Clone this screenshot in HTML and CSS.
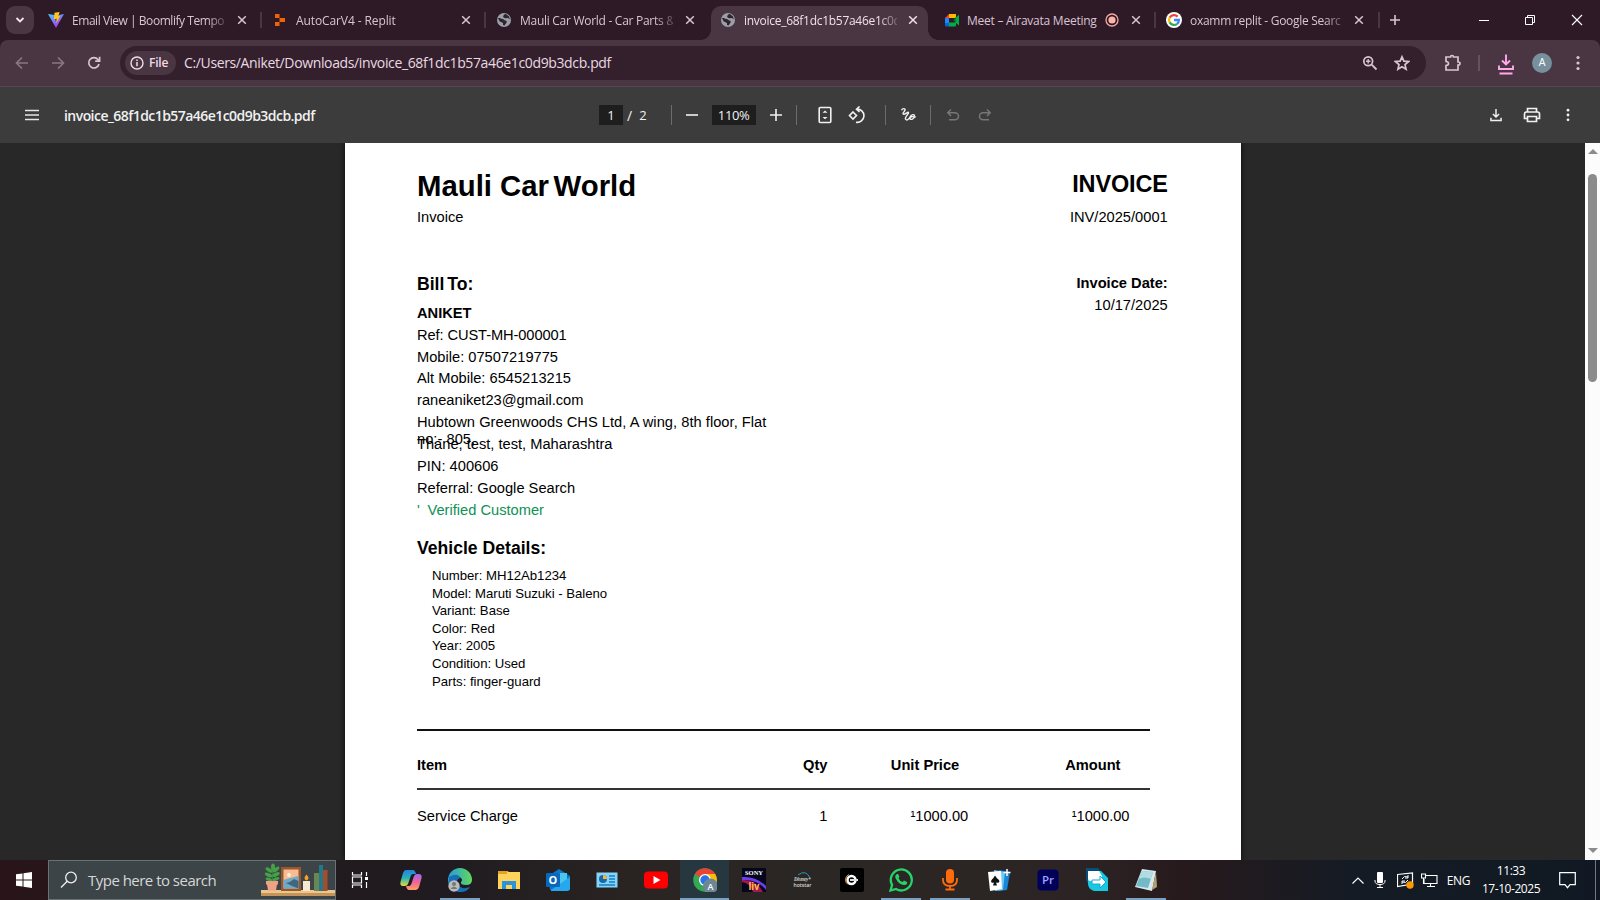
FILE: index.html
```html
<!DOCTYPE html>
<html lang="en">
<head>
<meta charset="utf-8">
<title>invoice_68f1dc1b57a46e1c0d9b3dcb.pdf</title>
<link rel="stylesheet" href="styles.css">
</head>
<body>
<svg width="0" height="0" class="defs">
  <defs>
    <symbol id="globe" viewBox="0 0 16 16"><circle cx="8" cy="8" r="7" fill="#9aa0a6"/><path d="M2 6c2-.2 3 .6 4.500 1 1.500.3 1.500 1.500 3 1.500 1.300.2 1.500 1.500.8 2.500L8.500 13.500 7 13V11L3.500 9.200zM8 2.500 7 5l2 1.200L12 6l1.800 1.500L13 4.500 10 2z" fill="#33222f"/></symbol>
    <symbol id="x" viewBox="0 0 10 10"><path d="M1.200 1.200l7.600 7.600M8.800 1.200L1.200 8.800" stroke="currentColor" stroke-width="1.500" fill="none"/></symbol>
    <symbol id="save" viewBox="0 0 16 16"><path d="M8 1v9M4.500 6.800L8 10.300l3.500-3.500M2.200 11v3.200h11.600V11" stroke="currentColor" stroke-width="1.700" fill="none"/></symbol>
    <symbol id="dots" viewBox="0 0 4 16"><g fill="currentColor"><circle cx="2" cy="2.500" r="1.600"/><circle cx="2" cy="8" r="1.600"/><circle cx="2" cy="13.500" r="1.600"/></g></symbol>
  </defs>
</svg>

<div class="tabs">
  <div class="tab-search"><svg width="10" height="8" viewBox="0 0 10 8"><path d="M1.500 2l3.500 3.500L8.500 2" stroke="#f3e4ee" stroke-width="1.800" fill="none"/></svg></div>
  <div class="tab line">
    <svg width="16" height="16" viewBox="0 0 16 16"><defs><linearGradient id="v" x1="0" y1="0" x2=".6" y2="1"><stop offset="0" stop-color="#41d1ff"/><stop offset="1" stop-color="#b32bf5"/></linearGradient></defs><path d="M0 2l6.500 1L8 10l3-7 5-1-8 14z" fill="url(#v)"/><path d="M6.500.8L11.500 0 10.500 4l1.800-.3-4 7.500.2-4.500-2.700.5z" fill="#ffc61e"/></svg>
    <span class="tt tight">Email View | Boomlify Tempo</span><svg class="cl"><use href="#x"/></svg>
  </div>
  <div class="tab line">
    <svg width="16" height="16" viewBox="0 0 16 16"><path d="M3 2h4.500v4H3zM7.500 6H13v4H7.500zM3 10h4.500v4H3z" fill="#f26207"/></svg>
    <span class="tt plain">AutoCarV4 - Replit</span><svg class="cl"><use href="#x"/></svg>
  </div>
  <div class="tab">
    <svg width="16" height="16"><use href="#globe"/></svg>
    <span class="tt">Mauli Car World - Car Parts &amp;</span><svg class="cl"><use href="#x"/></svg>
  </div>
  <div class="tab active">
    <svg width="16" height="16"><use href="#globe"/></svg>
    <span class="tt">invoice_68f1dc1b57a46e1c0d</span><svg class="cl"><use href="#x"/></svg>
  </div>
  <div class="tab line meet">
    <svg width="16" height="16" viewBox="0 0 16 16"><path d="M5 2h7v4H5z" fill="#ffba00"/><path d="M5 2v4H1z" fill="#ea4335"/><path d="M1 6h4v5H1z" fill="#2684fc"/><path d="M1 11h4v3.500H2q-1 0-1-1z" fill="#0066da"/><path d="M5 10.500h6V6l4-3.200v10.700L12 11v2.500q0 1-1 1H5z" fill="#00ac47"/><path d="M9.500 8L12 5v6z" fill="#00832d"/></svg>
    <span class="tt short">Meet – Airavata Meeting</span>
    <svg class="rec" width="14" height="14" viewBox="0 0 14 14"><circle cx="7" cy="7" r="6" fill="none" stroke="#f4a9a2" stroke-width="1.300"/><circle cx="7" cy="7" r="3.600" fill="#ffb4ab"/></svg><svg class="cl"><use href="#x"/></svg>
  </div>
  <div class="tab line last">
    <svg width="16" height="16" viewBox="0 0 16 16"><circle cx="8" cy="8" r="8" fill="#fff"/><g fill="none" stroke-width="2.300"><path d="M11.600 4.600A5 5 0 0 0 3.700 5.600" stroke="#ea4335"/><path d="M3.700 5.500A5 5 0 0 0 3.700 10.500" stroke="#fbbc05"/><path d="M3.700 10.400A5 5 0 0 0 11.200 11.800" stroke="#34a853"/><path d="M8 8h4.900A5 5 0 0 1 11.200 11.800" stroke="#4285f4"/></g></svg>
    <span class="tt">oxamm replit - Google Searc</span><svg class="cl"><use href="#x"/></svg>
  </div>
  <svg class="plus" width="12" height="12" viewBox="0 0 12 12"><path d="M6 1v10M1 6h10" stroke="#dcc3d4" stroke-width="1.600"/></svg>
  <div class="win">
    <svg width="10" height="10"><path d="M0 5.500h10" stroke="#fff"/></svg>
    <svg width="12" height="12"><path d="M3.500 3.500v-2h7v7h-2M1.500 3.500h7v7h-7z" stroke="#fff" fill="none"/></svg>
    <svg width="12" height="12"><path d="M1 1l10 10M11 1L1 11" stroke="#fff" stroke-width="1.100"/></svg>
  </div>
</div>

<div class="bar">
  <svg class="dim" width="14" height="14" viewBox="0 0 14 14"><path d="M13 7H2M7 1.500L1.500 7 7 12.500" /></svg>
  <svg class="dim fwd" width="14" height="14" viewBox="0 0 14 14"><path d="M1 7h11M7 1.500L12.500 7 7 12.500"/></svg>
  <svg class="reload" width="14" height="14" viewBox="0 0 14 14"><path d="M12 8A5.200 5.200 0 1 1 11 3.500L12.500 5M12.600.8V5.200H8.200"/></svg>
  <div class="omni">
    <div class="chip"><svg width="14" height="14" viewBox="0 0 14 14"><circle cx="7" cy="7" r="6" fill="none" stroke="#f1dbe8" stroke-width="1.400"/><path d="M7 6v4.200M7 3.600v1.500" stroke="#f1dbe8" stroke-width="1.500"/></svg><span>File</span></div>
    <span class="url">C:/Users/Aniket/Downloads/invoice_68f1dc1b57a46e1c0d9b3dcb.pdf</span>
    <svg class="zoom" width="16" height="16" viewBox="0 0 16 16"><path d="M9.700 9.700L14.500 14.500" stroke-width="1.800"/><circle cx="6.200" cy="6.200" r="4.400"/><path d="M6.200 4v4.400M4 6.200h4.400" stroke-width="1.400"/></svg>
    <svg class="star" width="16" height="16" viewBox="0 0 16 16"><path d="M8 1.800l1.900 4.300 4.700.4-3.600 3.100 1.100 4.600L8 11.800l-4.100 2.400L5 9.600 1.400 6.500l4.700-.4z"/></svg>
  </div>
  <svg class="ext" width="18" height="18" viewBox="0 0 18 18"><path d="M2 3h4.500q0-1.500 1.500-1.500T9.500 3H14v5q2 0 2 1.500T14 11v5H2v-4.500q2.500-.2 2.500-2T2 7.500z"/></svg>
  <i class="vsep"></i>
  <svg class="dl" width="18" height="22" viewBox="0 0 18 22"><path d="M9 1.500v9M5 7.500L9 11.500l4-4M2 12.500V16h14v-3.500M2.500 20.500h13"/></svg>
  <div class="avatar">A</div>
  <svg class="menu" width="4" height="16"><use href="#dots"/></svg>
</div>

<div class="pdfbar">
  <svg class="burger" width="14" height="12"><path d="M0 1.500h14M0 6h14M0 10.500h14" stroke="#e6e6e6" stroke-width="1.700"/></svg>
  <span class="fname">invoice_68f1dc1b57a46e1c0d9b3dcb.pdf</span>
  <div class="ctl">
    <span class="box pg">1</span><span class="slash">/</span><span class="two">2</span><i class="s s1"></i>
    <svg width="12" height="12"><path d="M0 6h12"/></svg><span class="box pc">110%</span><svg width="12" height="12"><path d="M0 6h12M6 0v12"/></svg><i class="s s2"></i>
    <svg class="fit" width="14" height="18" viewBox="0 0 14 18"><rect x="1.200" y="1.500" width="11.600" height="15" rx="1"/><path d="M4.500 6.800L7 4.500l2.500 2.300zM4.500 11L7 13.300 9.500 11z" fill="#f1f1f1" stroke="none"/></svg>
    <svg class="rot" width="18" height="18" viewBox="0 0 18 18"><path d="M5 6L8.500 9.500 5 13 1.500 9.500z"/><path d="M8.500 3.200a6.600 6.600 0 1 1-.5 13M11.500.5L8.500 3.200 11.500 6"/></svg><i class="s s3"></i>
    <svg class="draw" width="16" height="16" viewBox="0 0 16 16"><path d="M1.500 3.200C2.500 1.200 5.500 1 5 3S2 6.500 3.500 7.200 8 4.200 8.500 5.600 4.500 10 5.500 12s3.500.5 4.500-2 4.500-3.500 4.500-.8-4 4.300-4.500 2.300 3-2.300 5.800-1.300"/></svg><i class="s s4"></i>
    <svg class="undo" width="14" height="14" viewBox="0 0 14 14"><path d="M5 1.500L1.800 4.700 5 8M2 4.700h7a3.500 3.500 0 0 1 0 7H3"/></svg>
    <svg class="redo" width="14" height="14" viewBox="0 0 14 14"><path d="M9 1.500l3.200 3.200L9 8M12 4.700H5a3.500 3.500 0 0 0 0 7h6"/></svg>
  </div>
  <div class="right">
    <svg width="14" height="14"><use href="#save"/></svg>
    <svg class="prn" width="18" height="16" viewBox="0 0 18 16"><path d="M4.500 4.500v-3h9v3M4.500 11.500h-3V7q0-2 2-2h11q2 0 2 2v4.500h-3M4.500 9.500h9v5h-9z" stroke="#f1f1f1" stroke-width="1.700" fill="none"/></svg>
    <svg width="4" height="14"><use href="#dots"/></svg>
  </div>
</div>

<div class="viewer">
  <div class="page">
    <div class="top"><h1>Mauli Car<span> World</span></h1><h2>INVOICE</h2></div>
    <div class="top sub"><span>Invoice</span><span>INV/2025/0001</span></div>
    <div class="cols">
      <div class="bill">
        <h3>Bill To:</h3>
        <p><b>ANIKET</b></p><p class="ref">Ref: CUST-MH-000001</p><p>Mobile: 07507219775</p><p>Alt Mobile: 6545213215</p><p>raneaniket23@gmail.com</p>
        <p class="addr">Hubtown Greenwoods CHS Ltd, A wing, 8th floor, Flat<br>no:- 805,</p>
        <p>Thane, test, test, Maharashtra</p><p>PIN: 400606</p><p>Referral: Google Search</p>
        <p class="ok"><span>'</span>Verified Customer</p>
      </div>
      <div class="date"><b>Invoice Date:</b><span>10/17/2025</span></div>
    </div>
    <h3 class="vh">Vehicle Details:</h3>
    <ul><li>Number: MH12Ab1234</li><li>Model: Maruti Suzuki - Baleno</li><li>Variant: Base</li><li>Color: Red</li><li>Year: 2005</li><li>Condition: Used</li><li>Parts: finger-guard</li></ul>
    <div class="items">
      <div class="row head"><span>Item</span><span>Qty</span><span>Unit Price</span><span>Amount</span></div>
      <div class="row"><span>Service Charge</span><span>1</span><span>¹1000.00</span><span>¹1000.00</span></div>
    </div>
  </div>
  <div class="scroll"><i class="up"></i><div class="thumb"></div><i class="down"></i></div>
</div>

<div class="task">
  <div class="start"><svg width="16" height="16"><path d="M0 2.300L6.500 1.400V7.500H0zM7.500 1.200L16 0v7.500H7.500zM0 8.500h6.500v6.100L0 13.700zM7.500 8.500H16V16L7.500 14.800z" fill="#fff"/></svg></div>
  <div class="search">
    <svg width="18" height="18" viewBox="0 0 18 18"><circle cx="11" cy="6.500" r="5.300" fill="none" stroke="#eee" stroke-width="1.300"/><path d="M7.200 10.300L1 16.500" stroke="#eee" stroke-width="1.400"/></svg>
    <span>Type here to search</span>
    <svg class="shelf" width="74" height="36" viewBox="0 0 74 36"><path d="M0 29h74v5H0z" fill="#c4955b"/><path d="M0 28h74v3H0z" fill="#ecc68c"/><path d="M11.500 22V4" stroke="#2f7d3c" stroke-width="1.200"/><g fill="#46a047"><ellipse cx="12" cy="5" rx="2" ry="3.500"/><ellipse cx="8" cy="8" rx="4" ry="1.800" transform="rotate(35 8 8)"/><ellipse cx="15" cy="7.500" rx="4" ry="1.800" transform="rotate(-40 15 7.500)"/><ellipse cx="7.500" cy="13" rx="4" ry="1.800" transform="rotate(25 7.500 13)"/><ellipse cx="15" cy="12.500" rx="4" ry="1.800" transform="rotate(-25 15 12.500)"/><ellipse cx="8" cy="17.500" rx="3.500" ry="1.600" transform="rotate(20 8 17.500)"/><ellipse cx="15" cy="17" rx="3.500" ry="1.600" transform="rotate(-20 15 17)"/></g><path d="M5 19h12v3.500h-1l-1 6H7l-1-6H5z" fill="#f0a084"/><path d="M20 5h20v24H20z" fill="#98582c"/><path d="M22.500 7.500h15v19h-15z" fill="#f8bb94"/><circle cx="28" cy="13" r="2" fill="#fff1d0"/><path d="M22.500 18q6-2 15-4v12.500h-15z" fill="#70a9c3"/><path d="M25 21q5-1 8-4l4.500 2v7.500q-6-2-12.500-5.500z" fill="#416780"/><path d="M42 19h7v10h-7z" fill="#f8e8cf"/><path d="M45.500 12.500q4 4 0 6-4-2 0-6z" fill="#ff9f22"/><path d="M53 11h5v18h-5z" fill="#698653"/><path d="M58 3h4v26h-4z" fill="#24788b"/><path d="M62 8h4.500v21H62z" fill="#a24e2c"/></svg>
  </div>
  <div class="apps">
    <div class="app view"><svg width="18" height="16" viewBox="0 0 18 16"><path d="M1.500 0v3h9V0M1.500 16v-3h9v3M1.500 5h9v6h-9zM15.500 0v4M15.500 10v6" fill="none" stroke="#fff" stroke-width="1.200"/><path d="M14 5h3v3h-3z" fill="#fff"/></svg></div>
    <div class="app"><svg viewBox="0 0 24 24"><defs><linearGradient id="c1" x2="0" y2="1"><stop stop-color="#2680e8"/><stop offset=".5" stop-color="#26b3b4"/><stop offset="1" stop-color="#e8da3b"/></linearGradient><linearGradient id="c2" x2="0" y2="1"><stop stop-color="#9f69ef"/><stop offset=".5" stop-color="#ef629d"/><stop offset="1" stop-color="#ffa05e"/></linearGradient></defs><path d="M7 2h7q2 0 3 4h-3q-2 0-3 4l-2 6q-1 2-3 2H4q-4 0-2-6l2-7q1-3 3-3z" fill="url(#c1)"/><path d="M17 22h-7q-2 0-3-4h3q2 0 3-4l2-6q1-2 3-2h2q4 0 2 6l-2 7q-1 3-3 3z" fill="url(#c2)"/></svg></div>
    <div class="app run"><svg viewBox="0 0 24 24"><defs><linearGradient id="e" x2="1"><stop stop-color="#249cdc"/><stop offset="1" stop-color="#62d85b"/></linearGradient></defs><path d="M0 12a12 12 0 0 1 24 0q0 5-6 5t-5-3q2-2 0-4-4-4-8 1-4 6 3 12Q0 19 0 12z" fill="url(#e)"/><path d="M1 9q9-5 11 1-5 2-2 7 4 5 12 2-4 6-12 5Q0 21 1 9z" fill="#176fb4"/><circle cx="6" cy="18" r="5.700" fill="#bcbcbc"/><circle cx="6" cy="16" r="2" fill="#777"/><path d="M2.500 21q3.500-5 7 0z" fill="#777"/></svg></div>
    <div class="app"><svg viewBox="0 0 24 24"><path d="M1 3h9l2 1h11v17H1z" fill="#ffd35c"/><path d="M1 3h9v3H1z" fill="#e4a41d"/><path d="M5 13h14v8h-4v-4H9v4H5z" fill="#2794dc"/></svg></div>
    <div class="app"><svg viewBox="0 0 24 24"><path d="M2 8L13 1l11 7v14H4z" fill="#1274c6"/><path d="M6 5h15v12H6z" fill="#4ac7f0"/><path d="M5 22L24 9v11q0 3-3 3H5z" fill="#27a8ec"/><rect y="5" width="14" height="14" rx="1" fill="#0768bd"/><text x="7" y="16" class="ol">O</text></svg></div>
    <div class="app"><svg viewBox="0 0 24 24"><rect x="1.500" y="4.500" width="21" height="15" fill="#83d5fa"/><circle cx="8" cy="11" r="4" fill="#1769aa"/><path d="M8 7a4 4 0 0 1 4 4H8z" fill="#ffb42b"/><path d="M14 8h6M14 11h6M14 14h6M4 17h16" stroke="#1a7dc2" stroke-width="1.400"/></svg></div>
    <div class="app"><svg viewBox="0 0 24 24"><rect y="3.500" width="24" height="17" rx="4" fill="#f00"/><path d="M9.500 8l7 4-7 4z" fill="#fff"/></svg></div>
    <div class="app run cur"><svg viewBox="0 0 24 24"><circle cx="12" cy="12" r="11.800" fill="#34a853"/><path d="M12 12L1.800 6A11.800 11.800 0 0 1 22.200 6z" fill="#ea4335"/><path d="M12 12V6h10.200A11.800 11.800 0 0 1 12 23.800z" fill="#fbbc05"/><circle cx="12" cy="12" r="6" fill="#fff"/><circle cx="12" cy="12" r="4.700" fill="#2a72e9"/><circle cx="17.500" cy="18" r="7.500" fill="#6d8794"/><text x="17.500" y="21.500" class="av">A</text></svg></div>
    <div class="app"><svg viewBox="0 0 24 24"><path d="M0 0h24v24H0z" fill="#05051c"/><path d="M0 9q14-1 24 9v4q-8-11-24-10z" fill="#6f3df0"/><path d="M0 12q14-1 21 12H11Q8 15 0 14z" fill="#a51655"/><text x="12" y="7" class="sony" textLength="18" lengthAdjust="spacingAndGlyphs">SONY</text><text x="12" y="21.500" class="liv">liv</text></svg></div>
    <div class="app"><svg viewBox="0 0 24 24"><path d="M7 7q8-6 12 3" stroke="#239bbc" fill="none"/><text x="11.500" y="13" class="dis" textLength="17" lengthAdjust="spacingAndGlyphs">Disney+</text><text x="11.500" y="18.500" class="hot" textLength="18" lengthAdjust="spacingAndGlyphs">hotstar</text></svg></div>
    <div class="app"><svg viewBox="0 0 24 24"><rect width="24" height="24" rx="2" fill="#000"/><circle cx="11.500" cy="12" r="4" fill="none" stroke="#fff" stroke-width="2.500"/><path d="M8 16.500a5.700 5.700 0 0 1 1-10" stroke="#e2a036" fill="none"/><path d="M10 12h8" stroke="#ddd" stroke-width="2"/></svg></div>
    <div class="app run"><svg viewBox="0 0 24 24"><path d="M1.500 22.500L3.100 17A10.500 10.500 0 1 1 7 21z" fill="none" stroke="#25d366" stroke-width="2.300"/><path d="M8 6q-3 2-1 5 3 6 9 6 3-1 2-3l-3-1.500-1.500 1.500q-3-1-4-4l1-1.500L9 6z" fill="#25d366"/></svg></div>
    <div class="app run"><svg viewBox="0 0 24 24"><g fill="none" stroke="#ff6b0b" stroke-width="1.800"><path d="M5 10v2q0 6 7 6t7-6v-2M12 18v4M7.500 21.500h9"/></g><rect x="8" y="1" width="8" height="14.500" rx="4" fill="#ff6b0b"/></svg></div>
    <div class="app"><svg viewBox="0 0 24 24"><path d="M12 2l11 2-3 18-9 1z" fill="#1687d9"/><path d="M7 2l11 2-2 18-8 1z" fill="#70c8f1"/><path d="M1 4l13-1 1 18-12 2z" fill="#fff"/><path d="M8 7.500q1 2 4 4.500 1.500 3.500-3 2.500l1 3H6l1-3q-4 1-2.500-2.500 2.500-2.500 3.500-4.500z" fill="#111"/><path d="M20 1v7M16.500 4.500h7" stroke="#fff" stroke-width="1.500"/></svg></div>
    <div class="app"><svg viewBox="0 0 24 24"><rect x="1.500" y="1.500" width="21" height="21" rx="4" fill="#00005b"/><text x="12" y="16" class="pr">Pr</text></svg></div>
    <div class="app"><svg viewBox="0 0 24 24"><path d="M1 0h12l5 5H6v11H5q-4-1-4-5z" fill="#084e76"/><path d="M3 3h13l7 7v13H9q-6-2-6-7z" fill="#17c8e2"/><path d="M3 3h11l3 5v5H5q-2 0-2-3z" fill="#fff"/><path d="M7 12h8V8l6 6-6 6v-4H7z" fill="#fff" stroke="#17a8d2"/></svg></div>
    <div class="app run"><svg viewBox="0 0 24 24"><path d="M8 1l14 2-4 20L1 19z" fill="#d8e9ed"/><path d="M8 3l11 1-5 16-12-2z" fill="#73b9c8"/><path d="M8 3l11 1-2 7q-7-3-12 0z" fill="#b0dce2"/><path d="M22 4l1 15-5 3z" fill="#b3a171"/></svg></div>
  </div>
  <div class="tray">
    <svg width="14" height="9"><path d="M1.500 7.500L7 2l5.500 5.500" stroke="#fff" stroke-width="1.200" fill="none"/></svg>
    <svg class="tmic" width="12" height="16"><rect x="3" width="6" height="11" rx="1" fill="#fff"/><path d="M1 8v1q0 3.500 5 3.500T11 9V8M6 12v3M3 15.500h6" stroke="#fff" fill="none"/></svg>
    <svg class="sync" width="17" height="17"><path d="M.5 2.500L15.500 1v11L.5 14.500z" fill="none" stroke="#fff" stroke-width="1.200"/><path d="M5 7q2-4 6-2M11 3v3H8M11 8q-2 4-6 2M5 12V9h3" fill="none" stroke="#fff"/><circle cx="13" cy="13" r="3.700" fill="#ff9800"/></svg>
    <svg class="net" width="17" height="15"><path d="M5 2.500h11v8H3V6M9.500 10.500v3M6 13.500h8M.5 1h4v4h-4zM2.500 5v6" fill="none" stroke="#fff" stroke-width="1.100"/></svg>
    <span class="eng">ENG</span>
    <div class="clock"><span>11:33</span><span class="dt">17-10-2025</span></div>
    <svg class="note" width="17" height="17"><path d="M.7.700h15.600v12H11l-2.500 3-2.500-3H.7z" fill="none" stroke="#fff" stroke-width="1.200"/></svg>
    <i class="desk"></i>
  </div>
</div>
</body>
</html>
```

FILE: styles.css
```css
* { box-sizing: border-box; }
body { margin: 0; width: 1600px; height: 900px; overflow: hidden; display: flex; flex-direction: column; font-family: "Open Sans", "Noto Sans", sans-serif; background: #282828; }
svg { flex: none; display: block; }
.defs { position: absolute; }
h1, h2, h3, p, ul { margin: 0; padding: 0; font-weight: inherit; list-style: none; }

/* Tab strip */
.tabs { height: 40px; flex: none; display: flex; align-items: center; background: #2d1a26; color: #dcc3d4; font-size: 12px; }
.tab-search { width: 28px; height: 28px; margin: 0 3px 0 6px; border-radius: 9px; background: #4a3542; display: flex; align-items: center; justify-content: center; }
.tab { position: relative; width: 224px; height: 40px; padding-left: 11px; display: flex; align-items: center; }
.tab.meet { width: 222px; }
.tab.line::after { content: ""; position: absolute; right: -1px; top: 12px; width: 2px; height: 16px; background: #4a3542; }
.tt { margin-left: 8px; width: 153px; white-space: nowrap; letter-spacing: -.28px; -webkit-mask-image: linear-gradient(90deg, #000 88%, transparent 104%); }
.tt.tight { letter-spacing: -.45px; }
.tt.plain { letter-spacing: -.1px; }
.tt.short { width: 136px; margin-left: 7px; letter-spacing: -.24px; -webkit-mask-image: none; }
.rec { margin-left: 2px; }
.cl { width: 10px; height: 10px; margin-left: 12px; }
.last .cl { margin-left: 11px; }
.active { color: #f1dfe9; z-index: 1; }
.active::before { content: ""; position: absolute; left: 2px; right: 5px; top: 6px; bottom: 0; z-index: -1; background: #4a3542; border-radius: 10px 10px 0 0; }
.active::after { content: ""; position: absolute; left: -8px; right: -5px; bottom: 0; height: 10px; z-index: -1; background: radial-gradient(circle at 0 0, transparent 9.500px, #4a3542 10px) left / 10px 10px no-repeat, radial-gradient(circle at 100% 0, transparent 9.500px, #4a3542 10px) right / 10px 10px no-repeat; }
.active .cl { margin-left: 11px; }
.plus { margin-left: 10px; }
.win { margin-left: auto; margin-right: 17px; display: flex; align-items: center; gap: 35px; }

/* Address bar */
.bar { height: 47px; flex: none; display: flex; align-items: center; padding: 0 20px 1px 15px; background: #4a3542; border-bottom: 1px solid #574553; border-radius: 8px 8px 0 0; }
body::before { content: ""; position: absolute; z-index: -1; top: 40px; left: 0; width: 1600px; height: 10px; background: #2d1a26; }
.bar svg { fill: none; stroke: #dcc3d4; stroke-width: 1.700; }
.bar .dim { stroke: #8b7582; }
.fwd { margin-left: 22px; }
.reload { margin-left: 22px; }
.omni { width: 1306px; height: 34px; margin-left: 19px; border-radius: 17px; background: #33202c; display: flex; align-items: center; padding-left: 5px; }
.chip { width: 51px; height: 24px; border-radius: 12px; background: #4a3542; display: flex; align-items: center; padding-left: 5px; gap: 5px; color: #f1dbe8; font-size: 12px; font-weight: 600; letter-spacing: -.2px; }
.url { margin-left: 8px; font-size: 14px; color: #ead9e3; letter-spacing: -.365px; white-space: nowrap; }
.zoom { margin-left: auto; margin-right: 16px; }
.star { margin-right: 16px; }
.ext { margin-left: 18px; }
.vsep { width: 2px; height: 16px; margin-left: 16px; background: #66515e; }
.bar .dl { stroke: #ffa9e9; stroke-width: 1.900; margin-left: 17px; margin-top: 3px; }
.avatar { width: 20px; height: 20px; margin-left: 17px; border-radius: 50%; background: #78909c; color: #fff; font: 11px/20px Roboto, sans-serif; text-align: center; }
.bar .menu { margin-left: 24px; color: #dcc3d4; stroke: none; }

/* Document controls */
.pdfbar { height: 56px; flex: none; display: flex; align-items: center; padding: 0 30px 0 25px; background: #3c3c3c; color: #f1f1f1; font-size: 14px; }
.fname { width: 252px; margin-left: 25px; font-weight: 600; letter-spacing: -.55px; white-space: nowrap; }
.ctl { margin-left: 283px; display: flex; align-items: center; }
.ctl svg { fill: none; stroke: #f1f1f1; stroke-width: 1.600; }
.ctl .draw { stroke-width: 1.400; }
.box { height: 20px; background: #1e1e1e; font-size: 13px; line-height: 20px; text-align: center; }
.pg { width: 24px; }
.slash { margin-left: 4px; }
.two { margin-left: 7px; font-size: 13px; }
.s { width: 1px; height: 20px; background: #6c6c6c; }
.s1 { margin: 0 14px 0 24px; }
.pc { width: 44px; margin: 0 14px 0 14px; letter-spacing: -.4px; }
.s2 { margin: 0 21px 0 14px; }
.rot { margin-left: 16px; }
.s3 { margin: 0 14px 0 19px; }
.s4 { margin: 0 15px 0 14px; }
.ctl .undo, .ctl .redo { stroke: #777; stroke-width: 1.500; }
.redo { margin-left: 18px; }
.right { margin-left: auto; display: flex; align-items: center; }
.prn { margin: 0 25px 0 20px; }

/* Document */
.viewer { height: 717px; flex: none; display: flex; overflow: hidden; background: #282828; }
.page { width: 896px; height: 717px; margin-left: 345px; padding: 25px 73.300px 0 72px; background: #fff; color: #000; font: 14.670px/22px "Liberation Sans", Arial, sans-serif; box-shadow: 0 0 5px #0a0a0a; }
.top { display: flex; justify-content: space-between; }
.page h1 { font-size: 29.330px; line-height: 36px; font-weight: bold; }
.page h1 span { word-spacing: -3.600px; }
.page h2 { font-size: 23.470px; line-height: 32px; font-weight: bold; letter-spacing: -.15px; }
.sub { margin-top: 2px; line-height: 22px; }
.cols { display: flex; justify-content: space-between; margin-top: 45px; }
.page h3 { font-size: 17.600px; line-height: 22px; font-weight: bold; }
.bill { width: 375px; }
.bill h3 { margin-bottom: 7px; word-spacing: -2px; }
.bill p { height: 21.750px; line-height: 22px; white-space: nowrap; }
.bill .ref { letter-spacing: -.1px; }
.bill .addr { height: 22.600px; line-height: 17px; padding-top: 3.200px; letter-spacing: .03px; }
.bill .ok { color: #0e9155; }
.ok span { display: inline-block; width: 10.500px; }
.date { display: flex; flex-direction: column; align-items: flex-end; margin-top: -1px; }
.page .vh { margin-top: 16.700px; }
.page ul { margin: 8px 0 0 15px; font-size: 13.200px; line-height: 17.600px; letter-spacing: -.03px; }
.items { width: 733px; margin-top: 39px; border-top: 2px solid #111; }
.row { display: grid; grid-template-columns: 375px 35.500px 1fr 1fr; padding-top: 15px; height: 50px; }
.row span:nth-child(2) { text-align: right; }
.row span:nth-child(3), .row span:nth-child(4) { text-align: right; padding-right: 20.500px; }
.head { height: 59px; padding-top: 23px; font-weight: bold; border-bottom: 2px solid #333; }
.row.head span:nth-child(3), .row.head span:nth-child(4) { padding-right: 29.500px; }

/* Scrollbar */
.scroll { width: 15px; margin-left: auto; background: #fcfcfc; display: flex; flex-direction: column; align-items: center; }
.scroll i { border: 5px solid transparent; }
.scroll .up { border-top: 0; border-bottom-color: #8b8b8b; margin-top: 6px; }
.scroll .thumb { width: 9px; height: 208px; margin-top: 20px; border-radius: 5px; background: #8b8b8b; }
.scroll .down { border-bottom: 0; border-top-color: #8b8b8b; margin-top: auto; margin-bottom: 7px; }

/* Taskbar */
.task { height: 40px; flex: none; display: flex; align-items: center; color: #fff; background: linear-gradient(90deg, #291519 0, #211a1e 340px, #201b20 440px, #2a2522 650px, #2b2725 850px, #2c2424 1080px, #271a1c 1180px, #151b24 1350px, #101923 1600px); }
.start { width: 48px; padding-left: 16px; }
.search { width: 288px; height: 40px; border: 1px solid #6b7072; background: #3c4447; display: flex; align-items: center; padding-left: 11px; }
.search span { margin-left: 10px; font-size: 15px; letter-spacing: -.52px; color: #d6d7d8; white-space: nowrap; }
.shelf { margin-left: auto; }
.apps { display: flex; height: 40px; }
.app { width: 49px; height: 40px; display: flex; align-items: center; justify-content: center; }
.app svg { width: 24px; height: 24px; }
.app.view { width: 50px; padding-right: 2px; }
.app.view svg { width: 18px; height: 16px; }
.run { background: linear-gradient(#7aa1c2, #7aa1c2) center bottom / 40px 2px no-repeat; }
.cur { background: linear-gradient(#7aa1c2, #7aa1c2) center bottom / 49px 2px no-repeat, #273740; }
.app text { text-anchor: middle; fill: #fff; font-family: "Open Sans", sans-serif; }
.app .ol { font-size: 11px; font-weight: 700; }
.app .av { font-size: 9px; font-weight: 600; }
.app .sony { font: bold 5.500px "Liberation Serif", serif; }
.app .liv { font: 600 11px/1 Roboto, sans-serif; fill: #ffc044; }
.app .dis { font: italic bold 6.500px "Liberation Serif", serif; fill: #ddd; }
.app .hot { font-size: 5.500px; font-weight: 600; fill: #ddd; }
.app .pr { font-size: 11.500px; font-weight: 600; fill: #a3a0ff; }
.tray { margin-left: auto; display: flex; align-items: center; height: 40px; font-size: 12px; }
.tmic { margin-left: 9px; }
.sync { margin-left: 11px; }
.net { margin-left: 7px; }
.eng { margin-left: 9px; letter-spacing: -.4px; }
.clock { width: 60px; margin-left: 11px; display: flex; flex-direction: column; align-items: center; line-height: 18px; letter-spacing: -.45px; }
.note { margin-left: 18px; }
.desk { width: 1px; height: 40px; margin: 0 4px 0 19px; background: #777; }
```
